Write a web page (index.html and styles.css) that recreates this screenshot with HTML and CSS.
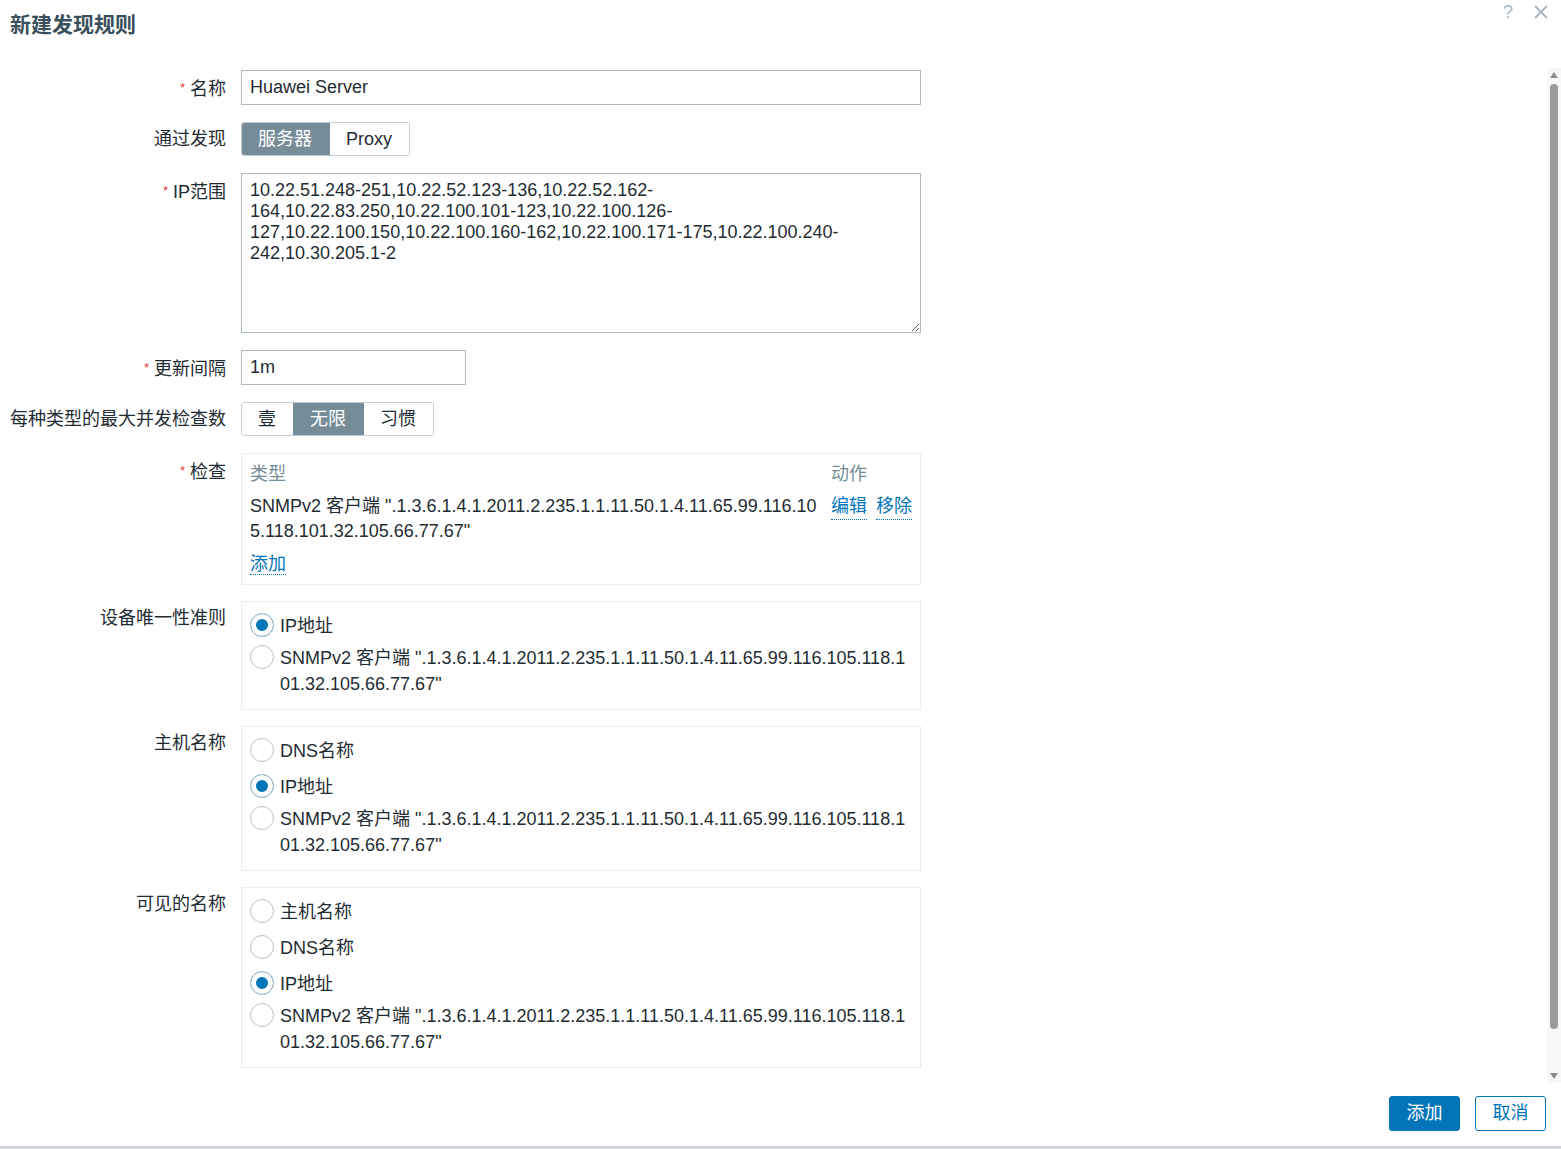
FILE: index.html
```html
<!DOCTYPE html>
<html lang="zh-CN">
<head>
<meta charset="utf-8">
<title>新建发现规则</title>
<link rel="stylesheet" href="styles.css">
</head>
<body>
<div class="dialog">
  <header class="dlg-head">
    <h4 class="dlg-title">新建发现规则</h4>
    <div class="dlg-tools">
      <span class="help">?</span>
      <svg class="close" width="14" height="14" viewBox="0 0 14 14"><path d="M1 1L13 13M13 1L1 13" stroke="#a6b8c2" stroke-width="2"/></svg>
    </div>
  </header>

  <div class="dlg-body">
    <div class="scroll-content">
      <form class="form">
        <div class="row">
          <label class="lbl req">名称</label>
          <div class="field"><input class="text wide" type="text" value="Huawei Server"></div>
        </div>

        <div class="row">
          <label class="lbl">通过发现</label>
          <div class="field">
            <div class="seg">
              <span class="seg-item on">服务器</span>
              <span class="seg-item">Proxy</span>
            </div>
          </div>
        </div>

        <div class="row">
          <label class="lbl req">IP范围</label>
          <div class="field"><textarea class="area">10.22.51.248-251,10.22.52.123-136,10.22.52.162-
164,10.22.83.250,10.22.100.101-123,10.22.100.126-
127,10.22.100.150,10.22.100.160-162,10.22.100.171-175,10.22.100.240-
242,10.30.205.1-2</textarea></div>
        </div>

        <div class="row">
          <label class="lbl req">更新间隔</label>
          <div class="field"><input class="text small" type="text" value="1m"></div>
        </div>

        <div class="row">
          <label class="lbl">每种类型的最大并发检查数</label>
          <div class="field">
            <div class="seg">
              <span class="seg-item">壹</span>
              <span class="seg-item on">无限</span>
              <span class="seg-item">习惯</span>
            </div>
          </div>
        </div>

        <div class="row">
          <label class="lbl req">检查</label>
          <div class="field">
            <div class="box checks">
              <div class="th">类型</div>
              <div class="th">动作</div>
              <div class="td text-break">SNMPv2 客户端 ".1.3.6.1.4.1.2011.2.235.1.1.11.50.1.4.11.65.99.116.105.118.101.32.105.66.77.67"</div>
              <div class="td actions"><a class="link">编辑</a><a class="link">移除</a></div>
              <div class="add-row"><a class="link">添加</a></div>
            </div>
          </div>
        </div>

        <div class="row boxed">
          <label class="lbl">设备唯一性准则</label>
          <div class="field">
            <ul class="box radios">
              <li class="radio"><input type="radio" name="uniq" checked><span>IP地址</span></li>
              <li class="radio multi"><input type="radio" name="uniq"><span class="text-break">SNMPv2 客户端 ".1.3.6.1.4.1.2011.2.235.1.1.11.50.1.4.11.65.99.116.105.118.101.32.105.66.77.67"</span></li>
            </ul>
          </div>
        </div>

        <div class="row boxed">
          <label class="lbl">主机名称</label>
          <div class="field">
            <ul class="box radios">
              <li class="radio"><input type="radio" name="host"><span>DNS名称</span></li>
              <li class="radio"><input type="radio" name="host" checked><span>IP地址</span></li>
              <li class="radio multi"><input type="radio" name="host"><span class="text-break">SNMPv2 客户端 ".1.3.6.1.4.1.2011.2.235.1.1.11.50.1.4.11.65.99.116.105.118.101.32.105.66.77.67"</span></li>
            </ul>
          </div>
        </div>

        <div class="row boxed">
          <label class="lbl">可见的名称</label>
          <div class="field">
            <ul class="box radios">
              <li class="radio"><input type="radio" name="vis"><span>主机名称</span></li>
              <li class="radio"><input type="radio" name="vis"><span>DNS名称</span></li>
              <li class="radio"><input type="radio" name="vis" checked><span>IP地址</span></li>
              <li class="radio multi"><input type="radio" name="vis"><span class="text-break">SNMPv2 客户端 ".1.3.6.1.4.1.2011.2.235.1.1.11.50.1.4.11.65.99.116.105.118.101.32.105.66.77.67"</span></li>
            </ul>
          </div>
        </div>
      </form>
    </div>
    <div class="scrollbar">
      <span class="arrow-up"></span>
      <span class="thumb"></span>
      <span class="arrow-down"></span>
    </div>
  </div>

  <footer class="dlg-foot">
    <button class="btn primary" type="button">添加</button>
    <button class="btn alt" type="button">取消</button>
  </footer>
</div>
</body>
</html>
```

FILE: styles.css
```css
* { box-sizing: border-box; }

html, body {
  margin: 0;
  padding: 0;
  background: #ffffff;
}

body {
  font-family: "Liberation Sans", Arial, "Noto Sans CJK SC", sans-serif;
  font-size: 18px;
  color: #1f2c33;
}

.dialog {
  height: 1149px;
  display: flex;
  flex-direction: column;
  border-bottom: 3px solid #cdd6db;
}

/* header */
.dlg-head {
  height: 68px;
  flex: none;
  display: flex;
  justify-content: space-between;
  align-items: flex-start;
  padding: 0 13px 0 10px;
}

.dlg-title {
  margin: 0;
  padding-top: 12px;
  font-size: 21px;
  line-height: 26px;
  height: 38px;
  font-weight: bold;
  color: #3a4f5c;
}

.dlg-tools {
  display: flex;
  align-items: center;
  gap: 21px;
  height: 24px;
}

.help {
  font-size: 18px;
  line-height: 24px;
  color: #a6b8c2;
}

.close { display: block; }

/* body */
.dlg-body {
  flex: none;
  height: 1015px;
  display: flex;
}

.scroll-content {
  flex: 1;
  overflow: hidden;
}

.form {
  margin: 0;
  padding: 2px 10px 0;
}

.row {
  display: flex;
  align-items: flex-start;
  gap: 15px;
}

.row + .row { margin-top: 17px; }
.row.boxed { margin-top: 16px; }

.lbl {
  width: 216px;
  height: 34px;
  flex: none;
  text-align: right;
  line-height: 35px;
  white-space: nowrap;
}

.req::before {
  content: "*";
  color: #e33734;
  font-size: 13px;
  margin-right: 5px;
  vertical-align: 3px;
}

.field { width: 680px; flex: none; }

.text {
  display: block;
  height: 35px;
  border: 1px solid #acbbc2;
  border-radius: 0;
  padding: 0 8px;
  font: inherit;
  color: #1f2c33;
  background: #fff;
  outline: none;
}

.text.wide { width: 680px; }
.text.small { width: 225px; }

.area {
  display: block;
  width: 680px;
  height: 160px;
  border: 1px solid #acbbc2;
  padding: 6px 8px 4px;
  font: inherit;
  line-height: 21px;
  color: #1f2c33;
  background: #fff;
  outline: none;
  white-space: pre-wrap;
}

/* segmented control */
.seg {
  display: flex;
  width: max-content;
  height: 34px;
  border: 1px solid #c3cdd3;
  border-radius: 3px;
  overflow: hidden;
}

.seg-item {
  display: flex;
  align-items: center;
  height: 32px;
  line-height: 32px;
  padding: 0 17px 0 16px;
  color: #1f2c33;
  background: #fff;
}

.seg-item + .seg-item { border-left: 1px solid #c3cdd3; }

.seg-item.on {
  background: #768d99;
  color: #fff;
  border-color: #768d99;
}

.seg-item.on + .seg-item { border-left-color: #768d99; }

/* boxes */
.box {
  border: 1px solid #ebeef0;
  margin: 0;
  list-style: none;
}

.checks {
  display: grid;
  grid-template-columns: 1fr 81px;
  column-gap: 10px;
  padding: 7px 8px 7px;
}

.th {
  height: 26px;
  line-height: 26px;
  color: #768d99;
}

.td {
  padding-top: 7px;
  line-height: 25px;
}

.text-break { word-break: break-all; }

.actions {
  display: flex;
  gap: 9px;
  align-items: flex-start;
  height: 57px;
}

.add-row {
  grid-column: 1 / -1;
  height: 33px;
  padding-top: 8px;
  line-height: 25px;
}

.link {
  color: #0275b8;
  border-bottom: 1px dotted #0275b8;
  cursor: pointer;
}

/* radio lists */
.radios {
  padding: 5px 8px 0;
}

.radio {
  display: flex;
  align-items: flex-start;
  height: 36px;
  padding: 5px 0;
  line-height: 26px;
}

.radio span { display: block; padding-top: 1px; }

.radio.multi {
  height: 66px;
  padding: 1px 0 13px;
}

.radio.multi span { height: 52px; }

.radio input {
  -webkit-appearance: none;
  appearance: none;
  flex: none;
  width: 24px;
  height: 24px;
  margin: 1px 6px 0 0;
  border: 1px solid #b4c1c8;
  border-radius: 50%;
  background: #fff;
}

.radio input:checked {
  background: #0275b8;
  box-shadow: inset 0 0 0 5px #fff;
}

/* fake scrollbar */
.scrollbar {
  width: 14px;
  flex: none;
  background: #f7f7f7;
  display: flex;
  flex-direction: column;
  align-items: center;
  padding: 4px 0 4px;
}

.arrow-up, .arrow-down {
  width: 0;
  height: 0;
  flex: none;
  border-left: 4px solid transparent;
  border-right: 4px solid transparent;
}

.arrow-up { border-bottom: 6px solid #8c8c8c; }
.arrow-down { border-top: 6px solid #8c8c8c; }

.thumb {
  width: 8px;
  height: 945px;
  flex: none;
  margin: 6px 0 auto;
  border-radius: 4px;
  background: #9b9b9b;
}

/* footer */
.dlg-foot {
  flex: none;
  height: 63px;
  display: flex;
  justify-content: flex-end;
  align-items: flex-start;
  gap: 15px;
  padding: 13px 15px 0;
}

.btn {
  height: 35px;
  width: 71px;
  border-radius: 3px;
  font: inherit;
  line-height: 31px;
  padding: 0;
  cursor: pointer;
}

.btn.primary {
  background: #0275b8;
  border: 1px solid #0275b8;
  color: #fff;
}

.btn.alt {
  background: #fff;
  border: 1px solid #0275b8;
  color: #0275b8;
}
```
